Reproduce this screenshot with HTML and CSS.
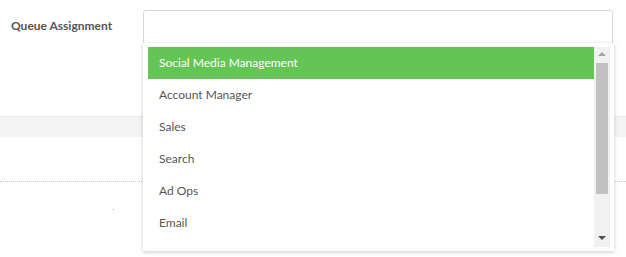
FILE: index.html
```html
<!DOCTYPE html>
<html>
<head>
<meta charset="utf-8">
<link rel="stylesheet" href="styles.css">
</head>
<body>
<div class="page">
  <div class="field">
    <div class="label">Queue Assignment</div>
    <div class="control">
      <div class="select-box"></div>
      <div class="dropdown">
        <ul class="options">
          <li class="opt selected">Social Media Management</li>
          <li class="opt">Account Manager</li>
          <li class="opt">Sales</li>
          <li class="opt">Search</li>
          <li class="opt">Ad Ops</li>
          <li class="opt">Email</li>
        </ul>
        <div class="scrollbar">
          <div class="arrow up"></div>
          <div class="track"><div class="thumb"></div></div>
          <div class="arrow down"></div>
        </div>
      </div>
    </div>
  </div>
  <div class="band"></div>
  <div class="spacer"></div>
  <div class="dotted"></div>
  <div class="lower"><span class="speck"></span></div>
</div>
</body>
</html>
```
FILE: styles.css
```css
html, body {
  margin: 0;
  padding: 0;
  background: #fff;
  font-family: Lato, "Open Sans", sans-serif;
  color: #555;
}
.page {
  width: 626px;
  height: 257px;
  overflow: hidden;
}
.field {
  display: grid;
  grid-template-columns: 143px 470px;
  height: 116px;
}
.label {
  font-size: 12px;
  font-weight: 700;
  line-height: 16px;
  padding: 18px 0 0 11px;
  color: #555;
}
.control {
  position: relative;
  padding-top: 10px;
}
.select-box {
  height: 40px;
  border: 1px solid #d6d6d6;
  border-radius: 3px;
  box-sizing: border-box;
  background: #fff;
}
.dropdown {
  position: absolute;
  left: 0;
  top: 43px;
  width: 471px;
  height: 208px;
  box-sizing: border-box;
  background: #fff;
  padding: 4px;
  display: flex;
  box-shadow: 0 1px 4px rgba(0,0,0,0.22);
  z-index: 5;
}
.options {
  list-style: none;
  margin: 0 0 0 1px;
  padding: 0;
  flex: 1;
  height: 200px;
  overflow: hidden;
}
.opt {
  height: 32px;
  line-height: 32px;
  padding-left: 11px;
  font-size: 12px;
  color: #555;
}
.opt.selected {
  background: #64c455;
  color: #fff;
}
.scrollbar {
  width: 16px;
  height: 200px;
  background: #f1f1f1;
  display: flex;
  flex-direction: column;
}
.arrow {
  height: 16px;
  position: relative;
}
.arrow::after {
  content: "";
  position: absolute;
  left: 4px;
  width: 0;
  height: 0;
  border-left: 4px solid transparent;
  border-right: 4px solid transparent;
}
.arrow.up::after {
  top: 5px;
  border-bottom: 4px solid #a3a3a3;
}
.arrow.down::after {
  top: 5px;
  border-top: 4px solid #505050;
}
.track {
  flex: 1;
  padding: 0 2px;
}
.thumb {
  height: 131px;
  background: #c1c1c1;
}
.band {
  height: 20px;
  border-top: 1px solid #e8e8e8;
  background: #f4f4f4;
}
.spacer {
  height: 44px;
}
.dotted {
  width: 626px;
  border-top: 1px dotted #c8c8c8;
}
.lower {
  height: 60px;
  position: relative;
}
.speck {
  position: absolute;
  left: 113px;
  top: 27px;
  width: 1px;
  height: 1px;
  background: #c9a36a;
}
```
